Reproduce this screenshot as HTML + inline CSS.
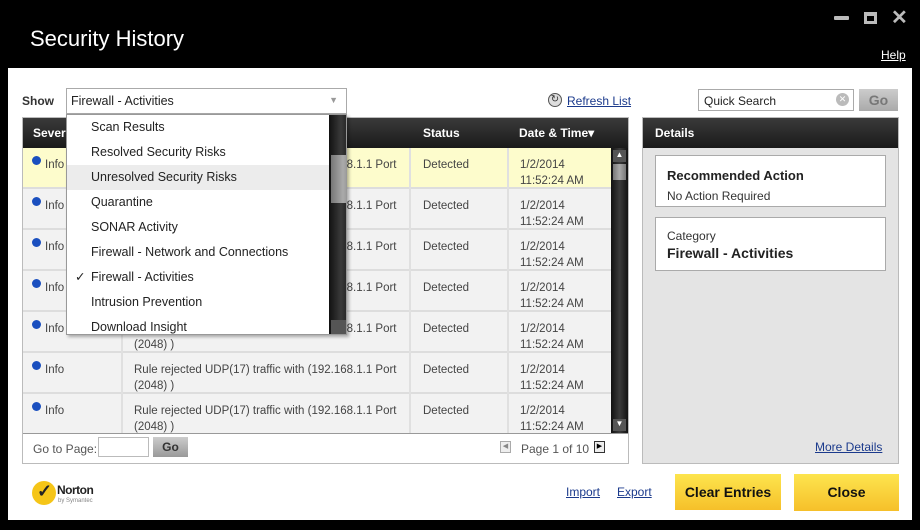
<!DOCTYPE html>
<html><head><style>
*{margin:0;padding:0;box-sizing:border-box}
body{width:920px;height:530px;background:#000;font-family:"Liberation Sans",sans-serif;font-size:12px;color:#333;position:relative;overflow:hidden}
.a{position:absolute}
.hdr{background:linear-gradient(#3a3a3a,#1a1a1a);color:#fff;font-weight:bold;font-size:12px}
.row{position:absolute;left:0;width:588px;height:41px;background:#f2f2f2;border-bottom:2px solid #ddd}
.row div{position:absolute;top:9px;line-height:16px;font-size:11.5px;color:#444}
.dot{width:9px;height:9px;border-radius:50%;background:#1a4fbf;position:absolute}
.sb{background:linear-gradient(90deg,#111,#3a3a3a,#111)}
.btn{position:absolute;background:linear-gradient(#fde54e,#f6c02a);font-weight:bold;font-size:14px;color:#111;text-align:center}
a{color:#1b3a8c;text-decoration:underline}
.dd div{height:25px;line-height:25px;padding-left:24px;font-size:12.5px;color:#222}
</style></head><body>
<div class="a" style="left:30px;top:26px;color:#fff;font-size:22px">Security History</div>
<div class="a" style="left:834px;top:16px;width:15px;height:4px;background:#bbb;border-radius:1px"></div>
<div class="a" style="left:864px;top:12px;width:13px;height:12px;border:3px solid #bbb;border-top-width:4px"></div>
<div class="a" style="left:891px;top:5px;color:#bbb;font-size:20px;font-weight:bold">✕</div>
<div class="a" style="left:881px;top:48px;color:#fff;font-size:12px;text-decoration:underline">Help</div>
<div class="a" style="left:8px;top:68px;width:904px;height:452px;background:#fff"></div>
<div class="a" style="left:22px;top:94px;font-weight:bold;font-size:12px">Show</div>
<div class="a" style="left:66px;top:88px;width:281px;height:26px;border:1px solid #aaa;padding:5px 4px;font-size:12.5px;color:#222">Firewall - Activities<span style="position:absolute;right:8px;top:6px;color:#999;font-size:9px">▼</span></div>
<div class="a" style="left:548px;top:93px;width:14px;height:14px;border-radius:50%;border:1px solid #555;background:#ddd;font-size:10px;line-height:12px;text-align:center">↻</div>
<a class="a" style="left:567px;top:94px;font-size:12px">Refresh List</a>
<div class="a" style="left:698px;top:89px;width:156px;height:22px;border:1px solid #aaa;padding:4px 5px;font-size:12px;color:#222">Quick Search<span style="position:absolute;right:4px;top:3px;width:13px;height:13px;border-radius:50%;background:#bbb;color:#fff;font-size:9px;line-height:13px;text-align:center">✕</span></div>
<div class="a" style="left:859px;top:89px;width:39px;height:22px;background:linear-gradient(#ccc,#aaa);color:#777;font-weight:bold;font-size:14px;text-align:center;line-height:22px">Go</div>
<div class="a" style="left:22px;top:117px;width:607px;height:347px;border:1px solid #bbb;background:#fff">
<div class="a hdr" style="left:0;top:0;width:605px;height:30px"><span class="a" style="left:10px;top:8px">Severity</span><span class="a" style="left:400px;top:8px">Status</span><span class="a" style="left:496px;top:8px">Date &amp; Time▾</span></div>
<div class="a" style="left:0;top:30px;width:588px;height:285px;overflow:hidden">
<div class="row" style="top:0;background:#fdfccc"><span class="dot" style="left:9px;top:8px"></span><div style="left:22px">Info</div><div style="left:111px">Rule rejected UDP(17) traffic with (192.168.1.1 Port<br>(2048) )</div><div style="left:400px">Detected</div><div style="left:497px">1/2/2014<br>11:52:24 AM</div></div>
<div class="row" style="top:41px"><span class="dot" style="left:9px;top:8px"></span><div style="left:22px">Info</div><div style="left:111px">Rule rejected UDP(17) traffic with (192.168.1.1 Port<br>(2048) )</div><div style="left:400px">Detected</div><div style="left:497px">1/2/2014<br>11:52:24 AM</div></div>
<div class="row" style="top:82px"><span class="dot" style="left:9px;top:8px"></span><div style="left:22px">Info</div><div style="left:111px">Rule rejected UDP(17) traffic with (192.168.1.1 Port<br>(2048) )</div><div style="left:400px">Detected</div><div style="left:497px">1/2/2014<br>11:52:24 AM</div></div>
<div class="row" style="top:123px"><span class="dot" style="left:9px;top:8px"></span><div style="left:22px">Info</div><div style="left:111px">Rule rejected UDP(17) traffic with (192.168.1.1 Port<br>(2048) )</div><div style="left:400px">Detected</div><div style="left:497px">1/2/2014<br>11:52:24 AM</div></div>
<div class="row" style="top:164px"><span class="dot" style="left:9px;top:8px"></span><div style="left:22px">Info</div><div style="left:111px">Rule rejected UDP(17) traffic with (192.168.1.1 Port<br>(2048) )</div><div style="left:400px">Detected</div><div style="left:497px">1/2/2014<br>11:52:24 AM</div></div>
<div class="row" style="top:205px"><span class="dot" style="left:9px;top:8px"></span><div style="left:22px">Info</div><div style="left:111px">Rule rejected UDP(17) traffic with (192.168.1.1 Port<br>(2048) )</div><div style="left:400px">Detected</div><div style="left:497px">1/2/2014<br>11:52:24 AM</div></div>
<div class="row" style="top:246px"><span class="dot" style="left:9px;top:8px"></span><div style="left:22px">Info</div><div style="left:111px">Rule rejected UDP(17) traffic with (192.168.1.1 Port<br>(2048) )</div><div style="left:400px">Detected</div><div style="left:497px">1/2/2014<br>11:52:24 AM</div></div>
<div class="a" style="left:98px;top:0;width:2px;height:285px;background:#e0e0e0"></div>
<div class="a" style="left:386px;top:0;width:2px;height:285px;background:#e0e0e0"></div>
<div class="a" style="left:484px;top:0;width:2px;height:285px;background:#e0e0e0"></div>
</div>
<div class="a sb" style="left:588px;top:30px;width:17px;height:285px"><div style="margin:2px 2px;height:12px;background:#555;color:#fff;font-size:8px;text-align:center">▲</div><div style="margin:0 2px;height:16px;background:linear-gradient(90deg,#777,#aaa,#777)"></div><div style="position:absolute;bottom:2px;left:2px;width:13px;height:12px;background:#555;color:#fff;font-size:8px;text-align:center">▼</div></div>
<div class="a" style="left:0;top:315px;width:605px;height:1px;background:#999"></div>
<div class="a" style="left:10px;top:324px;color:#555">Go to Page:</div>
<div class="a" style="left:75px;top:319px;width:51px;height:20px;border:1px solid #bbb"></div>
<div class="a" style="left:130px;top:319px;width:35px;height:20px;background:linear-gradient(#ccc,#999);font-weight:bold;text-align:center;line-height:20px">Go</div>
<div class="a" style="left:477px;top:323px;width:11px;height:12px;border:1px solid #aaa;background:#eee;color:#888;font-size:7px;text-align:center;line-height:10px">◀</div>
<div class="a" style="left:498px;top:324px;color:#555">Page 1 of 10</div>
<div class="a" style="left:571px;top:323px;width:11px;height:12px;border:1px solid #333;background:#eee;color:#000;font-size:7px;text-align:center;line-height:10px">▶</div>
</div>
<div class="a" style="left:642px;top:117px;width:257px;height:347px;border:1px solid #bbb;background:#e4e4e4">
<div class="a hdr" style="left:0;top:0;width:255px;height:30px"><span class="a" style="left:12px;top:8px">Details</span></div>
<div class="a" style="left:12px;top:37px;width:231px;height:52px;background:#fff;border:1px solid #aaa"><div style="position:absolute;left:11px;top:12px;font-weight:bold;font-size:13px;color:#222">Recommended Action</div><div style="position:absolute;left:11px;top:33px;font-size:12px">No Action Required</div></div>
<div class="a" style="left:12px;top:99px;width:231px;height:54px;background:#fff;border:1px solid #aaa"><div style="position:absolute;left:11px;top:11px;font-size:12px">Category</div><div style="position:absolute;left:11px;top:27px;font-weight:bold;font-size:14px;color:#222">Firewall - Activities</div></div>
<a class="a" style="left:172px;top:322px">More Details</a>
</div>
<div class="a dd" style="left:66px;top:114px;width:281px;height:221px;background:#fff;border:1px solid #999;box-shadow:2px 2px 3px rgba(0,0,0,.3);overflow:hidden">
<div>Scan Results</div><div>Resolved Security Risks</div><div style="background:#ececec">Unresolved Security Risks</div><div>Quarantine</div><div>SONAR Activity</div><div>Firewall - Network and Connections</div><div style="position:relative"><span style="position:absolute;left:8px">✓</span>Firewall - Activities</div><div>Intrusion Prevention</div><div>Download Insight</div>
<div class="a sb" style="left:262px;top:0;width:18px;height:221px"><div style="margin:2px;height:14px;background:#555;color:#fff;font-size:8px;text-align:center">▲</div><div style="position:absolute;left:2px;top:40px;width:14px;height:48px;background:linear-gradient(90deg,#777,#aaa,#777)"></div><div style="position:absolute;bottom:2px;left:2px;width:14px;height:14px;background:#555;color:#fff;font-size:8px;text-align:center">▼</div></div>
</div>
<div class="a" style="left:32px;top:481px;width:24px;height:24px;border-radius:50%;background:#f5c518"></div>
<div class="a" style="left:37px;top:481px;font-size:18px;font-weight:bold;color:#222">✓</div>
<div class="a" style="left:57px;top:483px;font-size:12px;font-weight:bold;color:#222;letter-spacing:-.5px">Norton</div>
<div class="a" style="left:58px;top:498px;font-size:6px;color:#888">by Symantec</div>
<a class="a" style="left:566px;top:485px">Import</a>
<a class="a" style="left:617px;top:485px">Export</a>
<div class="btn" style="left:675px;top:474px;width:106px;height:36px;line-height:36px">Clear Entries</div>
<div class="btn" style="left:794px;top:474px;width:105px;height:37px;line-height:37px">Close</div>
</body></html>
